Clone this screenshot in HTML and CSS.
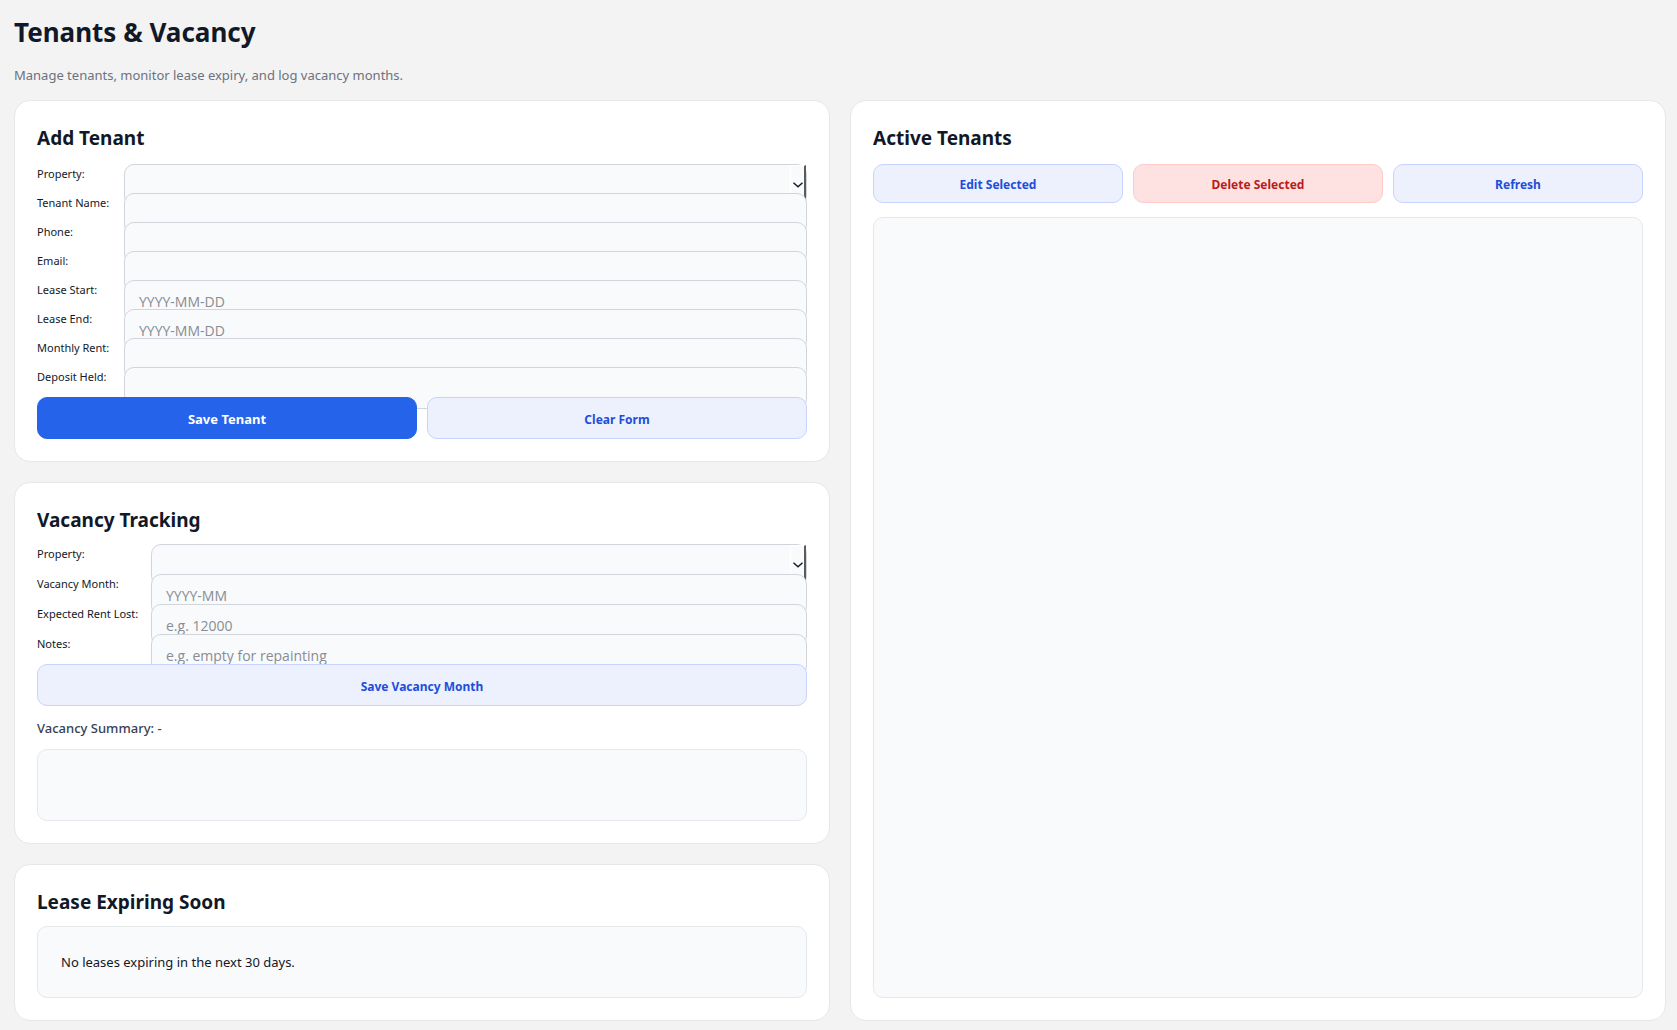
FILE: index.html
```html
<!DOCTYPE html>
<html lang="en">
<head>
<meta charset="utf-8">
<meta name="viewport" content="width=device-width, initial-scale=1">
<title>Tenants &amp; Vacancy</title>
<link rel="stylesheet" href="styles.css">
</head>
<body>
<header class="page-header">
  <h1 class="page-title">Tenants &amp; Vacancy</h1>
  <p class="page-subtitle">Manage tenants, monitor lease expiry, and log vacancy months.</p>
</header>
<main class="columns">
  <div class="column">
    <form class="card card-roomy">
      <h2 class="card-title">Add Tenant</h2>
      <div class="fields fields-tenant">
        <label class="label" for="tenant-property">Property:</label>
        <div class="select-box">
          <select class="input" id="tenant-property"><option value=""></option></select>
          <span class="select-button"><svg class="chevron" viewBox="0 0 10 6" aria-hidden="true"><path d="M0.5 0.8 5 4.8 9.5 0.8"/></svg></span>
        </div>
        <label class="label" for="tenant-name">Tenant Name:</label>
        <input class="input" id="tenant-name" type="text">
        <label class="label" for="phone">Phone:</label>
        <input class="input" id="phone" type="tel">
        <label class="label" for="email">Email:</label>
        <input class="input" id="email" type="email">
        <label class="label" for="lease-start">Lease Start:</label>
        <input class="input" id="lease-start" type="text" placeholder="YYYY-MM-DD">
        <label class="label" for="lease-end">Lease End:</label>
        <input class="input" id="lease-end" type="text" placeholder="YYYY-MM-DD">
        <label class="label" for="rent">Monthly Rent:</label>
        <input class="input" id="rent" type="text">
        <label class="label" for="deposit">Deposit Held:</label>
        <input class="input" id="deposit" type="text">
      </div>
      <div class="actions">
        <button class="button button-primary" type="button">Save Tenant</button>
        <button class="button" type="button">Clear Form</button>
      </div>
    </form>

    <form class="card">
      <h2 class="card-title">Vacancy Tracking</h2>
      <div class="fields fields-vacancy">
        <label class="label" for="vacancy-property">Property:</label>
        <div class="select-box">
          <select class="input" id="vacancy-property"><option value=""></option></select>
          <span class="select-button"><svg class="chevron" viewBox="0 0 10 6" aria-hidden="true"><path d="M0.5 0.8 5 4.8 9.5 0.8"/></svg></span>
        </div>
        <label class="label" for="vacancy-month">Vacancy Month:</label>
        <input class="input" id="vacancy-month" type="text" placeholder="YYYY-MM">
        <label class="label" for="rent-lost">Expected Rent Lost:</label>
        <input class="input" id="rent-lost" type="text" placeholder="e.g. 12000">
        <label class="label" for="notes">Notes:</label>
        <input class="input" id="notes" type="text" placeholder="e.g. empty for repainting">
      </div>
      <div class="actions">
        <button class="button" type="button">Save Vacancy Month</button>
      </div>
      <p class="summary">Vacancy Summary: -</p>
      <div class="list"></div>
    </form>

    <section class="card">
      <h2 class="card-title">Lease Expiring Soon</h2>
      <div class="list"><p class="list-item">No leases expiring in the next 30 days.</p></div>
    </section>
  </div>

  <section class="card card-roomy">
    <h2 class="card-title">Active Tenants</h2>
    <div class="actions toolbar">
      <button class="button" type="button">Edit Selected</button>
      <button class="button button-danger" type="button">Delete Selected</button>
      <button class="button" type="button">Refresh</button>
    </div>
    <div class="list list-fill"></div>
  </section>
</main>
</body>
</html>
```
FILE: styles.css
```css
* {
  box-sizing: border-box;
}

body {
  margin: 0;
  min-height: 100vh;
  padding: 12px 11px 9px 14px;
  display: flex;
  flex-direction: column;
  background: #f3f3f3;
  color: #111827;
  font-family: "Segoe UI", "Noto Sans", sans-serif;
  font-size: 12px;
}

h1, h2, p {
  margin: 0;
}

.page-header {
  display: flex;
  flex-direction: column;
  gap: 13px;
  padding-bottom: 15px;
}

.page-title {
  font-size: 26px;
  line-height: 40px;
  font-weight: 700;
}

.page-subtitle {
  font-size: 13px;
  line-height: 20px;
  color: #6b7280;
}

.columns {
  flex: 1;
  display: grid;
  grid-template-columns: 1fr 1fr;
  gap: 20px;
}

.column {
  display: flex;
  flex-direction: column;
  gap: 20px;
}

.card {
  display: flex;
  flex-direction: column;
  padding: 22px;
  border: 1px solid #e5e7eb;
  border-radius: 16px;
  background: #fff;
}

.card-title {
  margin-bottom: 8px;
  font-size: 19px;
  line-height: 31px;
  font-weight: 700;
}

.card-roomy .card-title {
  margin-bottom: 10px;
}

/* Rows are shorter than the inputs, so each input overlaps the one above. */
.fields {
  display: grid;
  align-items: start;
}

.fields-tenant {
  grid-template-columns: 87px 1fr;
  grid-auto-rows: 29px;
  padding-bottom: 1px;
}

.fields-vacancy {
  grid-template-columns: 114px 1fr;
  grid-auto-rows: 30px;
}

.label {
  font-size: 11px;
  line-height: 20px;
  white-space: nowrap;
}

.input {
  width: 100%;
  min-width: 0;
  height: 42px;
  margin: 0;
  padding: 0 14px;
  border: 1px solid #d1d5db;
  border-radius: 10px;
  background: #f9fafc;
  color: #111827;
  font-family: "Segoe UI", "Open Sans", sans-serif;
  font-size: 14px;
  appearance: none;
  outline: none;
}

.input::placeholder {
  color: #888c93;
  opacity: 1;
}

.select-box {
  display: grid;
}

.select-box > * {
  grid-area: 1 / 1;
}

.select-button {
  justify-self: end;
  width: 16px;
  height: 38px;
  margin: 1px 1px 0 0;
  display: flex;
  align-items: center;
  justify-content: center;
  border: solid #fff;
  border-width: 1px 0 0 1px;
  border-right: 2px solid #5a5a5a;
  background: #f9fafc;
  pointer-events: none;
}

.chevron {
  width: 10px;
  height: 6px;
  fill: none;
  stroke: #111827;
  stroke-width: 1.4;
}

.actions {
  display: flex;
  gap: 10px;
}

.button {
  flex: 1;
  height: 42px;
  padding: 2px 12px 0;
  border: 1px solid #c7d2fe;
  border-radius: 10px;
  background: #edf1fe;
  color: #1d4ed8;
  font-family: inherit;
  font-size: 12px;
  font-weight: 700;
}

.toolbar .button {
  height: 39px;
}

.button-primary {
  border-color: #2563eb;
  background: #2563eb;
  color: #fff;
  font-size: 13px;
}

.toolbar .button-danger {
  border-color: #fecaca;
  background: #fee2e2;
  color: #b91c1c;
}

.summary {
  margin: 12px 0 11px;
  font-size: 13px;
  line-height: 20px;
  font-weight: 500;
  color: #374151;
}

.list {
  min-height: 72px;
  padding: 25px 23px;
  border: 1px solid #e5e7eb;
  border-radius: 10px;
  background: #f9fafc;
}

.list-item {
  font-size: 13px;
  line-height: 20px;
}

.list-fill {
  flex: 1;
  margin-top: 14px;
}
```
